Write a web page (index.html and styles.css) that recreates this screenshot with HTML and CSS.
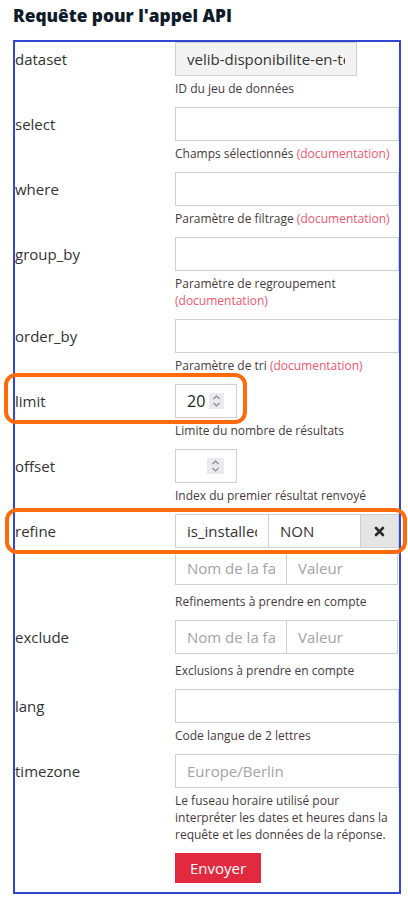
FILE: index.html
```html
<!DOCTYPE html>
<html lang="fr">
<head>
<meta charset="utf-8">
<title>Requête pour l'appel API</title>
<link rel="stylesheet" href="styles.css">
</head>
<body>
<h2 class="title">Requête pour l'appel API</h2>
<form class="api-form">
  <div class="row">
    <label class="label">dataset</label>
    <div class="field">
      <input class="input input-ro" type="text" value="velib-disponibilite-en-temps-reel" readonly>
      <p class="help">ID du jeu de données</p>
    </div>
  </div>
  <div class="row">
    <label class="label">select</label>
    <div class="field">
      <input class="input" type="text">
      <p class="help">Champs sélectionnés <a class="doc">(documentation)</a></p>
    </div>
  </div>
  <div class="row">
    <label class="label">where</label>
    <div class="field">
      <input class="input" type="text">
      <p class="help">Paramètre de filtrage <a class="doc">(documentation)</a></p>
    </div>
  </div>
  <div class="row">
    <label class="label">group_by</label>
    <div class="field">
      <input class="input" type="text">
      <p class="help">Paramètre de regroupement <a class="doc">(documentation)</a></p>
    </div>
  </div>
  <div class="row">
    <label class="label">order_by</label>
    <div class="field">
      <input class="input" type="text">
      <p class="help">Paramètre de tri <a class="doc">(documentation)</a></p>
    </div>
  </div>
  <div class="row">
    <span class="mark mark-limit"></span>
    <label class="label">limit</label>
    <div class="field">
      <div class="num"><span class="num-val">20</span><span class="spin"><svg width="11" height="14" viewBox="0 0 11 14"><path d="M2.5 5 L5.5 2 L8.5 5 M2.5 9 L5.5 12 L8.5 9" fill="none" stroke="#8a8a90" stroke-width="1.2"/></svg></span></div>
      <p class="help">Limite du nombre de résultats</p>
    </div>
  </div>
  <div class="row">
    <label class="label">offset</label>
    <div class="field">
      <div class="num"><span class="num-val"></span><span class="spin"><svg width="11" height="14" viewBox="0 0 11 14"><path d="M2.5 5 L5.5 2 L8.5 5 M2.5 9 L5.5 12 L8.5 9" fill="none" stroke="#8a8a90" stroke-width="1.2"/></svg></span></div>
      <p class="help">Index du premier résultat renvoyé</p>
    </div>
  </div>
  <div class="row">
    <span class="mark mark-refine"></span>
    <label class="label">refine</label>
    <div class="field">
      <div class="pair pair-filled">
        <input class="input pk pk-short" type="text" value="is_installed">
        <input class="input pv pv-short" type="text" value="NON">
        <button type="button" class="remove"><svg width="11" height="11" viewBox="0 0 11 11"><path d="M2 2 L9 9 M9 2 L2 9" stroke="#2b2b2b" stroke-width="2.6" stroke-linecap="round"/></svg></button>
      </div>
      <div class="pair">
        <input class="input pk" type="text" placeholder="Nom de la facette">
        <input class="input pv" type="text" placeholder="Valeur">
      </div>
      <p class="help">Refinements à prendre en compte</p>
    </div>
  </div>
  <div class="row">
    <label class="label">exclude</label>
    <div class="field">
      <div class="pair">
        <input class="input pk" type="text" placeholder="Nom de la facette">
        <input class="input pv" type="text" placeholder="Valeur">
      </div>
      <p class="help">Exclusions à prendre en compte</p>
    </div>
  </div>
  <div class="row">
    <label class="label">lang</label>
    <div class="field">
      <input class="input" type="text">
      <p class="help">Code langue de 2 lettres</p>
    </div>
  </div>
  <div class="row row-last">
    <label class="label">timezone</label>
    <div class="field">
      <input class="input" type="text" placeholder="Europe/Berlin">
      <p class="help">Le fuseau horaire utilisé pour interpréter les dates et heures dans la requête et les données de la réponse.</p>
      <button type="button" class="submit">Envoyer</button>
    </div>
  </div>
</form>
</body>
</html>
```

FILE: styles.css
```css
html, body {
  margin: 0;
  padding: 0;
  background: #ffffff;
}

body {
  padding: 0 7px 0 13px;
  font-family: "Open Sans", "DejaVu Sans", sans-serif;
  color: #333333;
}

.title {
  margin: 5px 0 13px 0;
  font-family: "Open Sans", sans-serif;
  font-weight: 800;
  font-size: 17.3px;
  line-height: 22px;
  color: #0f1a2b;
  letter-spacing: 0;
}

.api-form {
  width: 388px;
  box-sizing: border-box;
  border: 2px solid #3445d1;
  padding: 0 0 9px 0;
  display: flex;
  flex-direction: column;
}

.row {
  position: relative;
  display: grid;
  grid-template-columns: 160px 224px;
  margin-bottom: 10px;
}

.row-last {
  margin-bottom: 0;
}

.label {
  font-size: 15px;
  line-height: 34px;
  color: #333333;
}

.field {
  display: flex;
  flex-direction: column;
  align-items: flex-start;
}

.input {
  box-sizing: border-box;
  width: 224px;
  height: 34px;
  margin: 0;
  border: 1px solid #cfcfcf;
  border-radius: 0;
  padding: 0 11px;
  font-family: "Open Sans", sans-serif;
  font-size: 15px;
  color: #333333;
  background: #ffffff;
  outline: none;
}

.input::placeholder {
  color: #a3a3a3;
}

.input-ro {
  width: 182px;
  background: #f3f3f3;
}

.help {
  margin: 4px 0 0 0;
  font-size: 12px;
  line-height: 17px;
  color: #463a40;
}

.doc {
  color: #f0566d;
}

.num {
  box-sizing: border-box;
  width: 62px;
  height: 34px;
  border: 1px solid #cfcfcf;
  display: flex;
  align-items: center;
  padding: 0 12px 0 11px;
  gap: 4px;
}

.num-val {
  flex: 1;
  font-size: 16px;
  color: #222222;
  text-align: right;
}

.spin {
  width: 17px;
  height: 16px;
  background: #e9e9ee;
  display: flex;
  align-items: center;
  justify-content: center;
}

.pair {
  display: flex;
  width: 224px;
  margin-bottom: 4px;
}

.pair-filled {
  margin-bottom: 3px;
}

.pk {
  width: 112px;
}

.pv {
  width: 112px;
  margin-left: -1px;
}

.pk-short {
  width: 94px;
}

.pv-short {
  width: 93px;
}

.remove {
  box-sizing: border-box;
  width: 39px;
  height: 34px;
  margin: 0 0 0 -1px;
  padding: 0;
  border: 1px solid #cfcfcf;
  background: #e5e5e5;
  display: flex;
  align-items: center;
  justify-content: center;
}

.submit {
  margin-top: 10px;
  width: 86px;
  height: 30px;
  border: none;
  background: #e12a40;
  color: #ffffff;
  font-family: "Open Sans", sans-serif;
  font-size: 15px;
  padding: 0;
}

.mark {
  position: absolute;
  box-sizing: border-box;
  border: 4.5px solid #ff6b0a;
  border-radius: 12px;
  pointer-events: none;
}

.mark-limit {
  left: -11px;
  top: -11px;
  width: 243px;
  height: 51px;
}

.mark-refine {
  left: -10px;
  top: -6px;
  width: 402px;
  height: 46px;
}
```
